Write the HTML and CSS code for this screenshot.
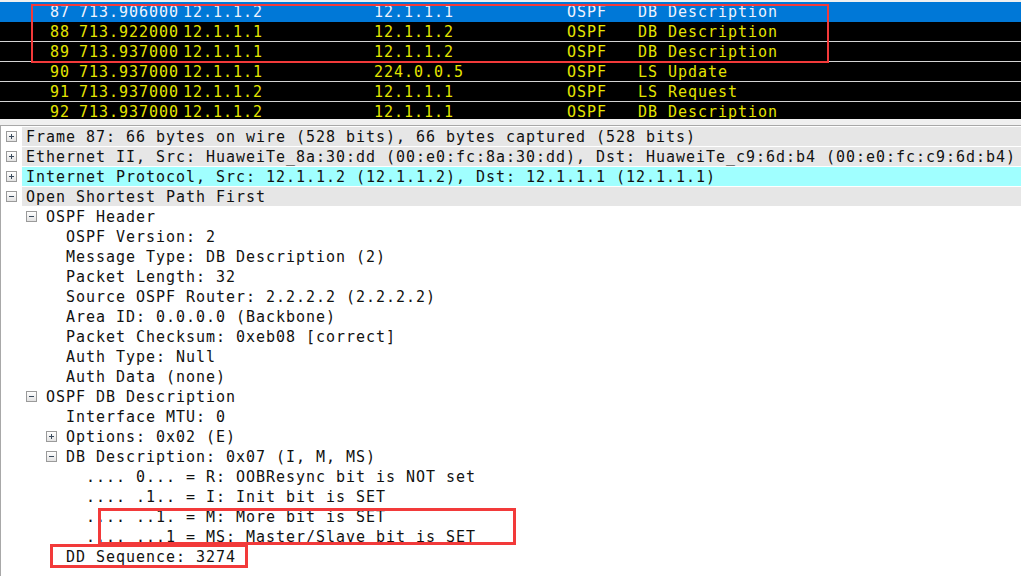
FILE: index.html
```html
<!DOCTYPE html>
<html>
<head>
<meta charset="utf-8">
<link rel="stylesheet" href="styles.css">
</head>
<body>
<div class="screen">
  <div class="packets">
    <div class="prow sel"><span class="c-no">87</span><span class="c-time">713.906000</span><span class="c-src">12.1.1.2</span><span class="c-dst">12.1.1.1</span><span class="c-proto">OSPF</span><span class="c-info">DB Description</span></div>
    <div class="prow"><span class="c-no">88</span><span class="c-time">713.922000</span><span class="c-src">12.1.1.1</span><span class="c-dst">12.1.1.2</span><span class="c-proto">OSPF</span><span class="c-info">DB Description</span></div>
    <div class="prow"><span class="c-no">89</span><span class="c-time">713.937000</span><span class="c-src">12.1.1.1</span><span class="c-dst">12.1.1.2</span><span class="c-proto">OSPF</span><span class="c-info">DB Description</span></div>
    <div class="prow"><span class="c-no">90</span><span class="c-time">713.937000</span><span class="c-src">12.1.1.1</span><span class="c-dst">224.0.0.5</span><span class="c-proto">OSPF</span><span class="c-info">LS Update</span></div>
    <div class="prow"><span class="c-no">91</span><span class="c-time">713.937000</span><span class="c-src">12.1.1.2</span><span class="c-dst">12.1.1.1</span><span class="c-proto">OSPF</span><span class="c-info">LS Request</span></div>
    <div class="prow"><span class="c-no">92</span><span class="c-time">713.937000</span><span class="c-src">12.1.1.2</span><span class="c-dst">12.1.1.1</span><span class="c-proto">OSPF</span><span class="c-info">DB Description</span></div>
  </div>
  <div class="splitter"></div>
  <div class="details">
    <div class="node lv0"><span class="tog plus"></span><span class="txt shade">Frame 87: 66 bytes on wire (528 bits), 66 bytes captured (528 bits)</span></div>
    <div class="node lv0"><span class="tog plus"></span><span class="txt shade">Ethernet II, Src: HuaweiTe_8a:30:dd (00:e0:fc:8a:30:dd), Dst: HuaweiTe_c9:6d:b4 (00:e0:fc:c9:6d:b4)</span></div>
    <div class="node lv0"><span class="tog plus"></span><span class="txt cyan">Internet Protocol, Src: 12.1.1.2 (12.1.1.2), Dst: 12.1.1.1 (12.1.1.1)</span></div>
    <div class="node lv0"><span class="tog minus"></span><span class="txt shade">Open Shortest Path First</span></div>
    <div class="node lv1"><span class="tog minus"></span><span class="txt">OSPF Header</span></div>
    <div class="node lv2"><span class="leaf"></span><span class="txt">OSPF Version: 2</span></div>
    <div class="node lv2"><span class="leaf"></span><span class="txt">Message Type: DB Description (2)</span></div>
    <div class="node lv2"><span class="leaf"></span><span class="txt">Packet Length: 32</span></div>
    <div class="node lv2"><span class="leaf"></span><span class="txt">Source OSPF Router: 2.2.2.2 (2.2.2.2)</span></div>
    <div class="node lv2"><span class="leaf"></span><span class="txt">Area ID: 0.0.0.0 (Backbone)</span></div>
    <div class="node lv2"><span class="leaf"></span><span class="txt">Packet Checksum: 0xeb08 [correct]</span></div>
    <div class="node lv2"><span class="leaf"></span><span class="txt">Auth Type: Null</span></div>
    <div class="node lv2"><span class="leaf"></span><span class="txt">Auth Data (none)</span></div>
    <div class="node lv1"><span class="tog minus"></span><span class="txt">OSPF DB Description</span></div>
    <div class="node lv2"><span class="leaf"></span><span class="txt">Interface MTU: 0</span></div>
    <div class="node lv2"><span class="tog plus"></span><span class="txt">Options: 0x02 (E)</span></div>
    <div class="node lv2"><span class="tog minus"></span><span class="txt">DB Description: 0x07 (I, M, MS)</span></div>
    <div class="node lv3"><span class="leaf"></span><span class="txt">.... 0... = R: OOBResync bit is NOT set</span></div>
    <div class="node lv3"><span class="leaf"></span><span class="txt">.... .1.. = I: Init bit is SET</span></div>
    <div class="node lv3"><span class="leaf"></span><span class="txt">.... ..1. = M: More bit is SET</span></div>
    <div class="node lv3"><span class="leaf"></span><span class="txt">.... ...1 = MS: Master/Slave bit is SET</span></div>
    <div class="node lv2"><span class="leaf"></span><span class="txt">DD Sequence: 3274</span></div>
  </div>
  <div class="mark mark-rows"></div>
  <div class="mark mark-bits"></div>
  <div class="mark mark-seq"></div>
</div>
</body>
</html>
```
FILE: styles.css
```css
* { box-sizing: border-box; }
html, body { margin: 0; padding: 0; background: #ffffff; }
.screen {
  position: relative;
  width: 1021px;
  height: 576px;
  overflow: hidden;
  font-family: "DejaVu Sans Mono", monospace;
  font-size: 15px;
  letter-spacing: 0.97px;
}
.packets {
  height: 119px;
  overflow: hidden;
  background: #f0f0f0;
  padding-top: 2px;
}
.prow {
  display: flex;
  height: 20px;
  line-height: 21px;
  background: #000000;
  color: #e4e400;
  border-bottom: 1px solid #d4d4d4;
  white-space: pre;
}
.prow.sel {
  background: #0078d7;
  color: #eef4ff;
  border-bottom-color: #0078d7;
}
.c-no { width: 70px; text-align: right; }
.c-time { width: 112px; padding-left: 9px; }
.c-src { width: 191px; padding-left: 1px; }
.c-dst { width: 193px; padding-left: 1px; }
.c-proto { width: 71px; padding-left: 1px; }
.c-info { flex: 1; padding-left: 1px; }
.splitter {
  height: 6px;
  background: #f0f0f0;
}
.details {
  height: 451px;
  border-top: 1px solid #a8a8a8;
  border-left: 1px solid #a8a8a8;
  background: #ffffff;
  color: #111111;
}
.node {
  display: flex;
  align-items: center;
  height: 20px;
  padding-top: 1px;
}
.lv0 { padding-left: 5px; }
.lv1 { padding-left: 25px; }
.lv2 { padding-left: 45px; }
.lv3 { padding-left: 65px; }
.tog, .leaf {
  flex: none;
  width: 11px;
  height: 11px;
  margin-right: 5px;
  position: relative;
}
.tog {
  border: 1px solid #9a9a9a;
  background: linear-gradient(#ffffff, #e2e2e2);
}
.tog::before {
  content: "";
  position: absolute;
  left: 2px;
  top: 4px;
  width: 5px;
  height: 1px;
  background: #3a4a5c;
}
.tog.plus::after {
  content: "";
  position: absolute;
  left: 4px;
  top: 2px;
  width: 1px;
  height: 5px;
  background: #3a4a5c;
}
.txt {
  flex: 1;
  height: 19px;
  line-height: 21px;
  padding-left: 4px;
  white-space: pre;
  overflow: hidden;
}
.shade { background: #e6e6e6; }
.cyan { background: #a0ffff; }
.mark {
  position: absolute;
  border: 2px solid #f23a3a;
}
.mark-rows { left: 31px; top: 4px; width: 798px; height: 59px; }
.mark-bits { left: 98px; top: 508px; width: 418px; height: 37px; border-width: 3px; }
.mark-seq { left: 50px; top: 544px; width: 198px; height: 24px; border-width: 3px; }
```
